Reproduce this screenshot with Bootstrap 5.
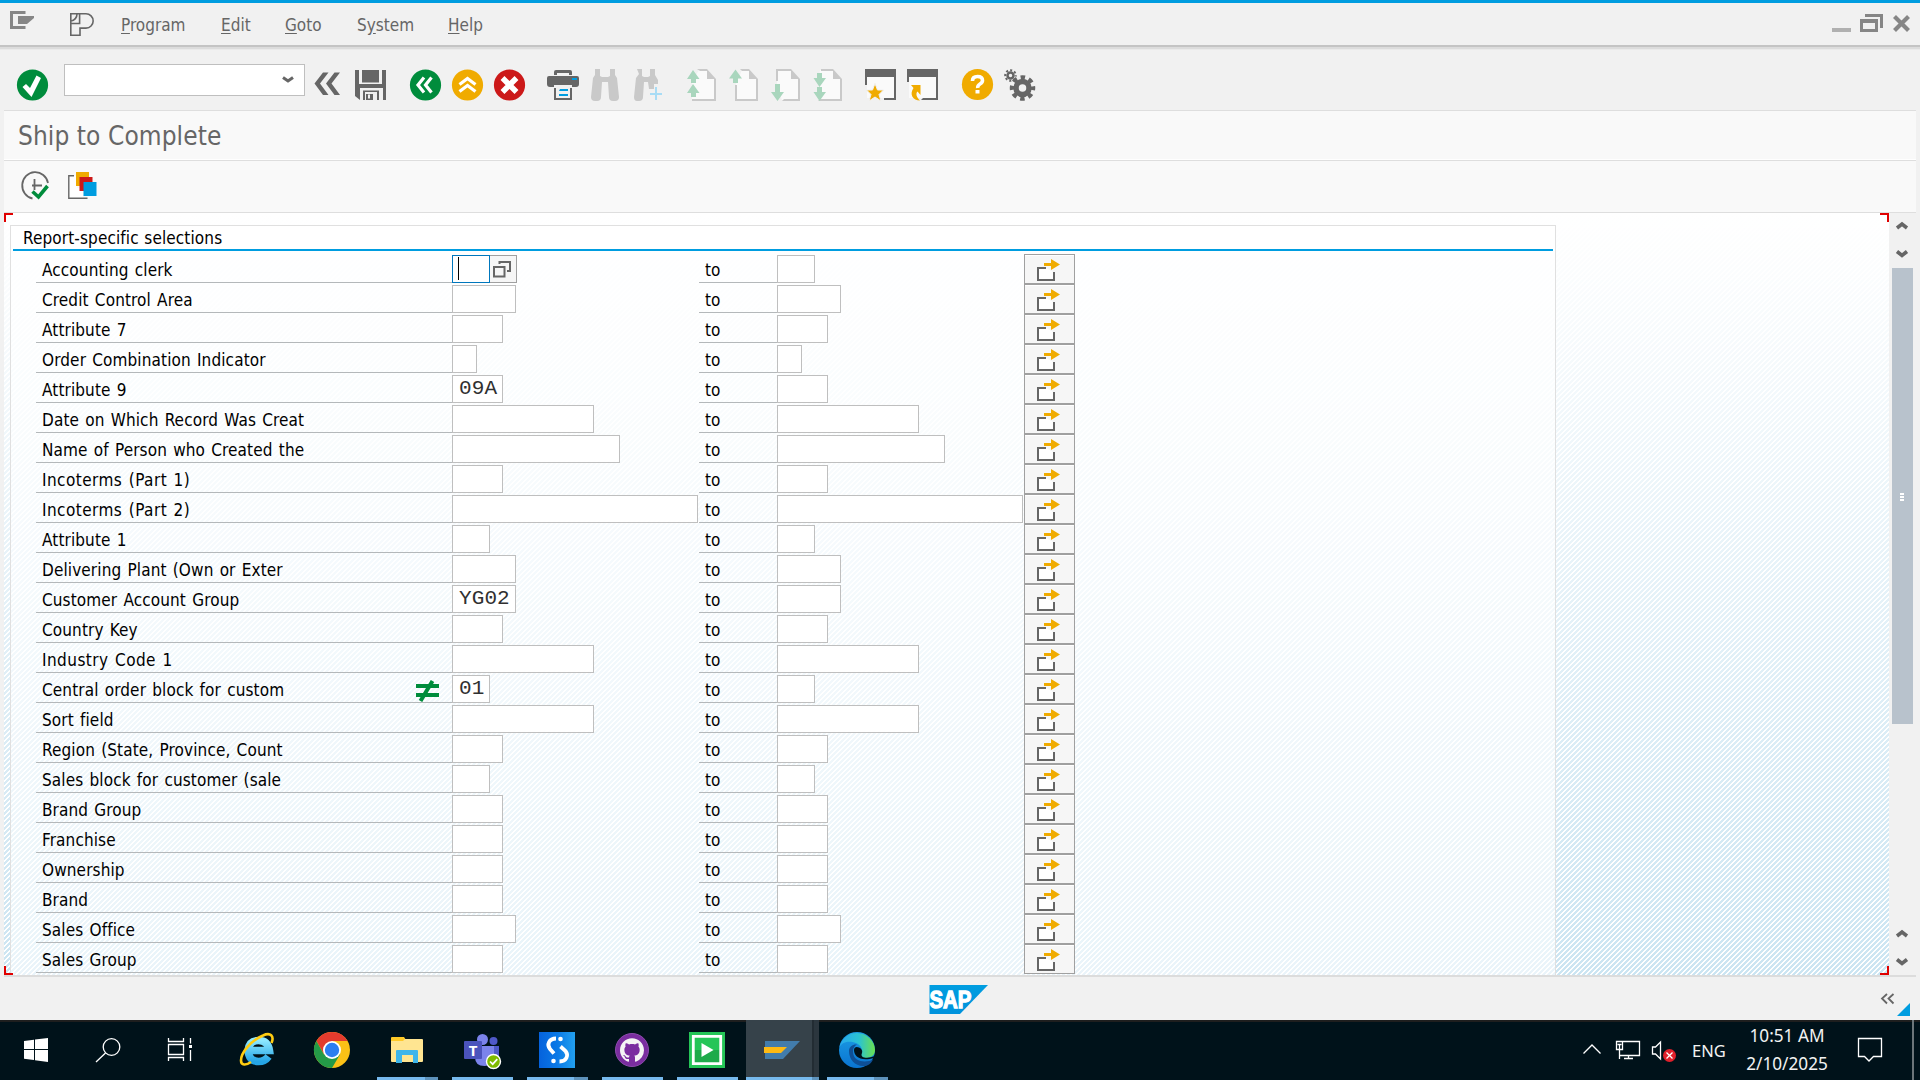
<!DOCTYPE html>
<html lang="en">
<head>
<meta charset="utf-8">
<meta name="viewport" content="width=device-width, initial-scale=1">
<title>Ship to Complete</title>
<link href="https://cdn.jsdelivr.net/npm/bootstrap@5.3.0/dist/css/bootstrap.min.css" rel="stylesheet">
<style>
  html, body { width: 1920px; height: 1080px; overflow: hidden; }
  body { background: #f1f1f1; color: #000; font-family: "DejaVu Sans Condensed", "DejaVu Sans", sans-serif; font-stretch: condensed; font-size: 17px; line-height: 20px; }
  svg { display: block; flex: none; }
  .menu-bar { height: 47px; background: #f1f1f1; border-top: 3px solid #009de0; border-bottom: 2px solid #c4c4c4; color: #666; }
  .menu-bar a { color: #666; text-decoration: none; margin-top: 12px; white-space: nowrap; }
  .menu-bar u { text-underline-offset: 2px; }
  .menu-shadow { height: 3px; background: linear-gradient(#dcdcdc 0 66%, #eaeaea 66%); }
  .sap-frame { margin: 0 4px; }
  .tool-bar { height: 61px; border-bottom: 1px solid #dedede; padding: 18px 0 0 12px; }
  .tool-set { gap: 8px; }
  .cmd-field { width: 241px; height: 32px; margin: -4px 8px 0 14px; border: 1px solid #bfbfbf; background: #fff; padding: 11px 10px; }
  .title-bar { height: 50px; background: #f9f9f9; border-bottom: 1px solid #dedede; box-shadow: inset 0 -1px #fff; font-size: 26px; line-height: 32px; letter-spacing: .08px; color: #666; padding: 9px 0 0 14px; }
  .app-bar { height: 52px; background: #f9f9f9; border-bottom: 1px solid #dedede; padding: 9px 0 0 15px; }
  .work { height: 762px; }
  .canvas-area { width: 1885px; padding: 12px 0 0 6px; overflow: hidden;
    background: linear-gradient(#fff 0, rgba(255,255,255,0) 100%), repeating-linear-gradient(135deg, #cce5f2 0 1.8px, #fff 2.1px 3.2px, #cce5f2 3.5355px); }
  .group-box { width: 1546px; height: 760px; border: 1px solid #e0e0e0; background: rgba(255,255,255,.58); }
  .group-head { height: 25px; margin: 0 2px 3px 2px; border-bottom: 2px solid #009de0; padding: 2px 0 0 10px; background: rgba(255,255,255,.6); letter-spacing: .12px; word-spacing: .6px; }
  .sel-row { display: grid; grid-template-columns: 416px 247px 78px 247px 51px; height: 30px; margin-left: 25px; }
  .sel-label { height: 28px; margin-top: 1px; border-bottom: 1px solid #b4b8ba; padding: 5px 0 0 6px; white-space: nowrap; letter-spacing: .12px; word-spacing: 1.2px; }
  .sel-label .wide-text { letter-spacing: .45px; }
  .sel-field { height: 28px; margin-top: 1px; border: 1px solid #bfbfbf; background: #fff; font: 21px/25px "Liberation Mono", monospace; letter-spacing: .1px; padding-left: 6px; color: #303030; }
  .sel-field.active-cell { border-color: #0077bd; padding: 1px 0 0 5px; }
  .caret-bar { width: 1px; height: 23px; background: #000; }
  .f4 { width: 27px; height: 28px; margin-top: 1px; border: 1px solid #a0a0a0; border-left: 0; background: #f6f6f6; padding: 5px 0 0 3px; }
  .multi { border: 1px solid #a0a0a0; background: #f6f6f6; box-shadow: inset 0 1px #fff; padding: 4px 0 0 12px; }
  .crn { position: absolute; width: 9px; height: 9px; border: 0 solid #e00000; }
  .scroll { width: 27px; background: #f1f1f1; padding-left: 3px; }
  .thumb { width: 21px; height: 456px; background: #b8c2cc; padding: 225px 0 0 8px; }
  .status { height: 45px; border-top: 2px solid #dcdcdc; }
  .task { height: 60px; background: #00121a; border-top: 2px solid #1e1e1e; color: #f2f2f2; font: 17px/28px "Noto Sans", sans-serif; }
  .task svg { margin-top: -2px; }
  .clock { width: 110px; text-align: center; margin: 0 1px 0 7px; font-size: 17.200px; }
</style>
</head>
<body class="d-flex flex-column">
<header>
  <nav class="menu-bar d-flex">
    <svg width="121" height="42" viewBox="0 3 121 42"><path fill="#868686" d="M25.500 11H10v18h15.500v-3H13V14h12.500z"/><path fill="#868686" d="M18 16h16v2l-7 6h-9z"/><path fill="none" stroke="#666" stroke-width="1.600" d="M70.800 13.800H86a7 7 0 0 1 0 14.300h-6v7.100h-9.200zM79.600 14v9.500H71M71 21a7 7 0 0 0 6-7"/></svg>
    <a href="#" style="width:100px"><u>P</u>rogram</a><a href="#" style="width:64px"><u>E</u>dit</a><a href="#" style="width:72px"><u>G</u>oto</a><a href="#" style="width:91px">S<u>y</u>stem</a><a href="#"><u>H</u>elp</a>
    <svg class="ms-auto" width="90" height="42" viewBox="1830 3 90 42"><path fill="#b0b0b0" d="M1832 28h19v4h-19z"/><path fill="#868686" fill-rule="evenodd" d="M1860 19h18v13h-18zm3 4v6h12v-6zM1865 14h18v14h-3V17h-15z"/><path stroke="#868686" stroke-width="4.200" d="M1894.500 16.500l14 14m0-14l-14 14"/></svg>
  </nav>
  <div class="menu-shadow"></div>
</header>
<main class="sap-frame">
  <div class="tool-bar d-flex align-items-start">
    <svg width="34" height="34" viewBox="16 68 34 34"><circle cx="32.500" cy="85" r="15.600" fill="#008c3c"/><path fill="#fff" d="M22.500 87l3.500-3 4 4 6.500-12.500 4.500 2.500-9.500 19z"/></svg>
    <div class="cmd-field d-flex justify-content-end"><svg width="12" height="8" viewBox="0 0 12 8"><path d="M1 1.500l5 3.500 5-3.500" stroke="#666" stroke-width="3" fill="none"/></svg></div>
    <div class="tool-set d-flex">
      <svg width="34" height="34" viewBox="313 68 34 34"><path fill="#666" d="M328.500 72.500H323L314.500 83.500l8.500 11.500h5.500l-8.500-11.500zM340 72.500h-5.500l-8.500 11 8.500 11.500h5.500L331.500 83.500z"/></svg>
      <svg width="34" height="34" viewBox="355 68 34 34"><path fill="#666" d="M355 70h4v14h23V70h4v30h-3V88h-23v12l-5-4zM362 70h17v12.500h-17zM363 90.500h16V100h-2v-8h-12v8h-2zM366 94h7v6h-7z"/><path fill="#f1f1f1" d="M368 94.500h2v4h-2z"/></svg>
    </div>
    <div class="tool-set d-flex" style="margin-left:20px">
      <svg width="34" height="34" viewBox="409 68 34 34"><circle cx="425.500" cy="85" r="15.600" fill="#008c3c"/><path fill="none" stroke="#fff" stroke-width="3.200" d="M424 77.500l-6 7.500 6 7.500M431.500 77.500l-6 7.500 6 7.500"/></svg>
      <svg width="34" height="34" viewBox="451 68 34 34"><circle cx="467.500" cy="85" r="15.600" fill="#f0ab00"/><path fill="none" stroke="#fff" stroke-width="3.200" d="M459.500 84.500l8-6 8 6M459.500 91.500l8-6 8 6"/></svg>
      <svg width="34" height="34" viewBox="493 68 34 34"><circle cx="509.500" cy="85" r="15.600" fill="#cc1919"/><path stroke="#fff" stroke-width="5.500" d="M502.500 78l14 14m0-14l-14 14"/></svg>
    </div>
    <div class="tool-set d-flex" style="margin-left:19px">
      <svg width="34" height="34" viewBox="546 68 34 34"><path fill="#666" d="M554 75v-3q0-2 2-2h14q2 0 2 2v3h-3v-2h-12v2zM549 76h28q2 0 2 2v6q0 3-3 3h-4v-2h-18v2h-4q-3 0-3-3v-6q0-2 2-2zM554 88h2v10h14V88h2v12h-18z"/><path fill="#009de0" d="M572 78h5v2h-5zM560 89h8v2h-9zM559 94h9v2h-9z"/></svg>
      <svg width="34" height="34" viewBox="588 68 34 34"><path fill="#c9c9c9" d="M595 69h5v7l2 1h6l2-1v-7h5v6l2 3 2 19q0 4-4 4h-2q-4 0-4-4l-1-15h-6l-1 15q0 4-4 4h-2q-4 0-4-4l2-19 2-3z"/></svg>
      <svg width="34" height="34" viewBox="630 68 34 34"><path fill="#c9c9c9" d="M637 69h5v7l2 1h4l2-1v-7h5v6l3 5v4h-4v5h-5l-1-7h-4l-1 15q0 4-4 4h-2q-3 0-3-4l2-19 3-4z"/><path stroke="#a8dcf5" stroke-width="2" d="M650 94h12m-6-7v13"/></svg>
    </div>
    <div class="tool-set d-flex" style="margin-left:22px">
      <svg width="34" height="34" viewBox="686 68 34 34"><path fill="#fafafa" d="M699 70h9l7 9v22h-23V82z"/><path fill="#c9c9c9" d="M697 69h10l9 10v22h-24v-2h22V79h-7v-8h-7z"/><path fill="#a9d6bd" d="M693 70l6.500 9H696v4h-5v-4h-4zM693 84l6.500 9H696v4h-5v-4h-4z"/></svg>
      <svg width="34" height="34" viewBox="728 68 34 34"><path fill="#fafafa" d="M742 70h8l7 9v21h-21V84z"/><path fill="#c9c9c9" d="M740 69h9l9 10v22h-23V85h2v14h19V79h-7v-8h-7z"/><path fill="#a9d6bd" d="M735.500 69.500l6.500 9h-4V83h-5v-4.500h-4z"/></svg>
      <svg width="34" height="34" viewBox="770 68 34 34"><path fill="#fafafa" d="M777 70h15l7 9v21h-17l-5-16z"/><path fill="#c9c9c9" d="M776 69h15l9 10v22h-18l2-2h14V79h-7v-8h-13v10h-2z"/><path fill="#a9d6bd" d="M777.500 101l-6.500-9h4v-8h5v8h4z"/></svg>
      <svg width="34" height="34" viewBox="812 68 34 34"><path fill="#fafafa" d="M820 70h13l8 9v21h-22V80z"/><path fill="#c9c9c9" d="M821 69h12l9 10v22h-24l2-2h20V79h-7v-8h-12z"/><path fill="#a9d6bd" d="M819.500 87l-6-9h3.500v-5h5v5h4zM819.500 101l-6-9h3.500v-5h5v5h4z"/></svg>
    </div>
    <div class="tool-set d-flex" style="margin-left:18px">
      <svg width="34" height="34" viewBox="864 68 34 34"><path fill="#fafafa" d="M867 77h27v21h-27z"/><path fill="#666" d="M865 69h31v31h-12v-2h10V77h-27v8h-2z"/><path fill="#f0ab00" stroke="#f1f1f1" d="M875 83.500l2.500 6.500h6l-4.500 4.500 2 6.500-6-4-6 4 2-6.500-4.500-4.500h6z"/></svg>
      <svg width="34" height="34" viewBox="906 68 34 34"><path fill="#fafafa" d="M909 77h27v21h-27z"/><path fill="#666" d="M907 69h31v31h-17l2-2h13V77h-27v5h-2z"/><path fill="#f0ab00" d="M911 85h9.500v10l-3-3.500c-2 2-1 6 2.500 9-7 0-11-6-6.500-12.500z"/></svg>
    </div>
    <div class="tool-set d-flex" style="margin-left:21px">
      <svg width="34" height="34" viewBox="961 68 34 34"><circle cx="977.500" cy="84.500" r="15.600" fill="#f0ab00"/><path fill="none" stroke="#fff" stroke-width="3.600" d="M972.500 81q0-4.500 5-4.500t5 4q0 2-2.500 3.500t-2.300 4"/><path fill="#fff" d="M975.500 90h4v3.500h-4z"/></svg>
      <svg width="34" height="34" viewBox="1003 68 34 34"><g fill="none" stroke="#666"><circle cx="1022.500" cy="88" r="6.500" stroke-width="5.500"/><circle cx="1022.500" cy="88" r="10.500" stroke-width="4.500" stroke-dasharray="4.400 3.847" stroke-dashoffset="2.200"/><circle cx="1010.500" cy="75.500" r="3" stroke-width="2.500"/><circle cx="1010.500" cy="75.500" r="5.300" stroke-width="2" stroke-dasharray="2.080 2.080" stroke-dashoffset="1"/></g></svg>
    </div>
  </div>
  <div class="title-bar">Ship to Complete</div>
  <div class="app-bar d-flex">
    <svg width="34" height="34" viewBox="19 170 34 34"><path d="M48 183a13 13.300 0 1 0-15.500 15.500M34.500 179v11M32 185.500h10" stroke="#666" stroke-width="1.800" fill="none"/><path d="M32.500 191.500l6 5.500 9-11" stroke="#008c3c" stroke-width="3.600" fill="none"/></svg>
    <svg style="margin-left:13px" width="34" height="34" viewBox="66 170 34 34"><path fill="#fff" d="M69 176h8v12h6v10H69z"/><path d="M74 175.700h-5.200v22.500H87.500" stroke="#666" stroke-width="1.400" fill="none"/><path fill="#f0ab00" d="M76 172h13v14H76z"/><path fill="#cc1919" d="M79.500 177h13v14h-13z"/><path fill="#009de0" d="M83.500 182H96.500v14h-13z"/></svg>
  </div>
  <section class="work d-flex">
    <div class="canvas-area position-relative">
      <span class="crn top-0 start-0" style="border-width:2px 0 0 2px"></span><span class="crn top-0 end-0" style="border-width:2px 2px 0 0"></span>
      <span class="crn bottom-0 start-0" style="border-width:0 0 2px 2px"></span><span class="crn bottom-0 end-0" style="border-width:0 2px 2px 0"></span>
      <div class="group-box">
        <div class="group-head">Report-specific selections</div>
        <div id="rows"></div>
      </div>
    </div>
    <div class="scroll d-flex flex-column">
      <svg width="21" height="55" viewBox="1892 213 21 55"><path d="M1897 228l5-4 5 4M1897 251.500l5 4 5-4" fill="none" stroke="#666" stroke-width="3.600"/></svg>
      <div class="thumb"><svg width="4" height="8"><path fill="#fff" d="M0 0h4v2H0zM0 3h4v2H0zM0 6h4v2H0z"/></svg></div>
      <svg class="mt-auto" width="21" height="51" viewBox="1892 924 21 51"><path d="M1897 936l5-4 5 4M1897 959.500l5 4 5-4" fill="none" stroke="#666" stroke-width="3.600"/></svg>
    </div>
  </section>
  <footer class="status d-flex">
    <svg style="margin-left:925px" width="60" height="43" viewBox="929 977 60 43"><defs><linearGradient id="sapg" x2="0" y2="1"><stop stop-color="#009de0"/><stop offset="1" stop-color="#0092dc"/></linearGradient></defs><path fill="url(#sapg)" d="M929.500 985H988l-28 29h-30.500z"/><text x="929.500" y="1007.500" textLength="42" lengthAdjust="spacingAndGlyphs" font-family="Liberation Sans, sans-serif" font-weight="700" font-size="24" fill="#fff" stroke="#fff" stroke-width="1.300">SAP</text></svg>
    <svg class="ms-auto" width="40" height="43" viewBox="1876 977 40 43"><path d="M1887 994l-5 4.500 5 5M1893.500 994l-5 4.500 5 5" fill="none" stroke="#666" stroke-width="1.800"/><path fill="#009de0" d="M1910 1003v13h-13z"/></svg>
  </footer>
</main>
<footer class="task d-flex mt-auto">
  <svg width="219" height="60" viewBox="0 1020 219 60"><path fill="#fff" d="M24 1041l10-1.300v9.300H24zM35 1039.500l13-1.500v11H35zM24 1050h10v10l-10-1.300zM35 1050h13v12l-13-1.800z"/><g fill="none" stroke="#fff" stroke-width="1.300"><circle cx="111.500" cy="1047" r="8.300"/><path d="M105.500 1053l-9.500 9M168.500 1038v3.500h15V1038M168.500 1044.500h15v10h-15zM168.500 1061v-3.500h15v3.500M190.500 1038v5.500M190.500 1050v11"/></g><path fill="#fff" d="M189 1045h3v3h-3z"/></svg>
  <svg width="75" height="60" viewBox="219 1020 75 60"><defs><linearGradient id="ieg" x2="0" y2="1"><stop stop-color="#8ee8ff"/><stop offset="1" stop-color="#25a5e6"/></linearGradient></defs><path fill="none" stroke="url(#ieg)" stroke-width="7.500" d="M250 1050.500h19.500q-1.500-10-11-10t-10.500 10q1 11 10.500 11 6.500 0 10-5"/><path fill="none" stroke="#fc1" stroke-width="2.600" d="M271.500 1043c3-7-1-11-8.500-7.500-12 5-22 17-22 25 0 5 5 5 10 1.500"/></svg>
  <svg width="75" height="60" viewBox="294 1020 75 60"><circle cx="332" cy="1050" r="18" fill="#fbc116"/><path fill="#e33b2e" d="M332 1050v-9h15.600a18 18 0 0 0-31.200 0l7.800 13.500z"/><path fill="#249a47" d="M316.400 1041a18 18 0 0 0 15.600 27l8-13.500-8-4.500-8 4.500z"/><circle cx="332" cy="1050" r="9" fill="#fff"/><circle cx="332" cy="1050" r="7.200" fill="#2c7ef0"/></svg>
  <svg width="75" height="60" viewBox="369 1020 75 60"><path fill="#ffca28" d="M391 1038q0-1 1-1h12l2 3h-1v5h-14z"/><path fill="#ffe591" d="M391 1041h12l2-2h17q1 0 1 1v21q0 1-1 1h-30q-1 0-1-1z"/><path fill="#3eb5ea" d="M396 1063v-12q0-1 1-1h20q1 0 1 1v12h-5v-8h-11v8z"/><path fill="#76b9ed" d="M377 1077h48v3h-48z"/><path fill="#5d92bb" d="M425 1077h13v3h-13z"/></svg>
  <svg width="75" height="60" viewBox="444 1020 75 60"><circle cx="482.500" cy="1039.500" r="5.500" fill="#7b83eb"/><circle cx="493.500" cy="1041" r="4" fill="#5059c9"/><path fill="#5059c9" d="M487 1046h12v12q-4 6-12 3z"/><path fill="#7b83eb" d="M475 1046h19v11q0 9-9.500 9t-9.500-9z"/><rect x="464" y="1041" width="18" height="18" rx="1" fill="#4b53bc"/><text x="473" y="1055.500" text-anchor="middle" font-family="Noto Sans, sans-serif" font-weight="700" font-size="15" fill="#fff">T</text><circle cx="493.500" cy="1061.500" r="7" fill="#7fba00" stroke="#fff" stroke-width="1.400"/><path d="M490 1061.500l2.700 2.700 4.600-5" fill="none" stroke="#fff" stroke-width="1.700"/><path fill="#76b9ed" d="M452 1077h61v3h-61z"/></svg>
  <svg width="75" height="60" viewBox="519 1020 75 60"><defs><linearGradient id="sg"><stop stop-color="#0562dc"/><stop offset=".5" stop-color="#0a78e6"/><stop offset="1" stop-color="#22a0ef"/></linearGradient></defs><path fill="url(#sg)" d="M539 1032h36v36h-36z"/><path fill="none" stroke="#fff" stroke-width="3.800" d="M556 1038.500c-7 0-9.500 6-6 10.500l4 4.500M559.500 1061.500c7 0 9.500-6 6-10.500l-5-4.500"/><circle cx="560.500" cy="1039" r="2.300" fill="#fff"/><circle cx="553.500" cy="1061" r="2.300" fill="#fff"/><path fill="#76b9ed" d="M527 1077h47v3h-47z"/><path fill="#5d92bb" d="M574 1077h14v3h-14z"/></svg>
  <svg width="75" height="60" viewBox="594 1020 75 60"><circle cx="632" cy="1050" r="16.500" fill="#7a2da0" stroke="#8b4bab"/><path fill="#f4f4f4" transform="translate(620 1038.300) scale(1.500)" d="M8 0C3.580 0 0 3.580 0 8c0 3.540 2.290 6.530 5.470 7.590.4.070.55-.17.55-.38 0-.19-.01-.82-.01-1.490-2.010.37-2.530-.49-2.690-.94-.09-.23-.48-.94-.82-1.130-.28-.15-.68-.52-.01-.53.630-.01 1.080.58 1.230.82.720 1.210 1.870.87 2.330.66.070-.52.280-.87.510-1.070-1.780-.2-3.640-.89-3.640-3.950 0-.87.310-1.590.82-2.150-.08-.2-.36-1.020.08-2.120 0 0 .67-.21 2.200.82.640-.18 1.320-.27 2-.27s1.360.09 2 .27c1.530-1.040 2.200-.82 2.200-.82.440 1.100.16 1.920.08 2.120.51.56.82 1.270.82 2.150 0 3.070-1.870 3.750-3.650 3.950.29.25.54.73.54 1.480 0 1.070-.01 1.930-.01 2.200 0 .21.15.46.55.38A8 8 0 0 0 16 8c0-4.420-3.580-8-8-8z"/><path fill="#76b9ed" d="M602 1077h61v3h-61z"/></svg>
  <svg width="75" height="60" viewBox="669 1020 75 60"><path fill="#25c557" d="M689 1032h36v36h-36z"/><path fill="#1eaa4a" d="M694 1050h26v13h-26z"/><path fill="none" stroke="#fff" stroke-width="2.800" d="M693.300 1036.300h27.400v27.400h-27.400z"/><path fill="#fff" d="M701.500 1043l12 7-12 7z"/><path fill="#76b9ed" d="M677 1077h61v3h-61z"/></svg>
  <svg width="75" height="60" viewBox="744 1020 75 60"><path fill="#36424a" d="M746 1020h66v60h-66z"/><path fill="#222c33" d="M812 1020h2v60h-2z"/><path fill="#2b363e" d="M814 1020h5v60h-5z"/><path fill="#427cac" d="M765 1041h35l-17 18h-18z"/><path fill="#fdb913" d="M764 1047h23l-6 6h-17z"/><path fill="#76b9ed" d="M746 1077h66v3h-66z"/><path fill="#5d92bb" d="M812 1077h7v3h-7z"/></svg>
  <svg width="75" height="60" viewBox="819 1020 75 60"><defs><linearGradient id="eg1"><stop stop-color="#27a8ee"/><stop offset=".55" stop-color="#2bc3d2"/><stop offset="1" stop-color="#6be04e"/></linearGradient><linearGradient id="eg2" x2="0" y2="1"><stop stop-color="#1c9de4"/><stop offset="1" stop-color="#0a74d1"/></linearGradient></defs><circle cx="857" cy="1050" r="18" fill="url(#eg2)"/><path fill="url(#eg1)" d="M839.500 1047a18 18 0 0 1 35.500 3c0 6-5 8-9.500 8s-6.500-2-4-5c2-3-1-10-9-11s-11 2-13 5z"/><path fill="#0e4f96" d="M849 1051c0 10 8 17 18 14.500 3-1 5-3.500 6-6-5 3-20 4-20-8 0-4 2-6 4-7-4-.5-8 2-8 6.500z"/><path fill="#00121a" d="M854 1050c0 6 6 12 20 8l-1 1.500 3 1V1055c-5 4-17 4-14-2 2-5-8-9-8-3z"/><path fill="#76b9ed" d="M827 1077h47v3h-47z"/><path fill="#5d92bb" d="M874 1077h14v3h-14z"/></svg>
  <svg class="ms-auto" width="105" height="60" viewBox="1577 1020 105 60"><g fill="none" stroke="#fff" stroke-width="1.300"><path d="M1583.500 1053.500l8.500-8.500 8.500 8.500M1622.500 1041.500h17v14h-20.500M1616.500 1041.500h6v8h-6zM1617.500 1044.500h4M1619.500 1044.500v14.500M1624 1058.500h9M1628.500 1056v2.500M1652.500 1047h3l5-5v17l-5-5h-3z"/></g><circle cx="1669.500" cy="1055.500" r="6.500" fill="#e0202b"/><path stroke="#fff" stroke-width="1.300" d="M1666.500 1052.500l6 6m0-6l-6 6"/></svg>
  <div style="margin:15px 0 0 10px;width:33px;font-size:16.500px">ENG</div>
  <div class="clock">10:51 AM<br>2/10/2025</div>
  <svg width="77" height="60" viewBox="1843 1020 77 60"><path fill="none" stroke="#fff" stroke-width="1.300" d="M1858.500 1038.500h23v18h-8l-4.500 4.500-4.500-4.500h-6z"/><path fill="#6c757a" d="M1912 1020h2v60h-2z"/></svg>
</footer>
<script src="https://cdn.jsdelivr.net/npm/bootstrap@5.3.0/dist/js/bootstrap.bundle.min.js"></script>
<script>
  // label, field width in pixels, preset value, optional option icon
  const rows = [
    ["Accounting clerk", 38], ["Credit Control Area", 64], ["Attribute 7", 51], ["Order Combination Indicator", 25],
    ["Attribute 9", 51, "09A"], ["Date on Which Record Was Creat", 142], ["Name of Person who Created the", 168],
    ["Incoterms (Part 1)", 51], ["Incoterms (Part 2)", 246], ["Attribute 1", 38], ["Delivering Plant (Own or Exter", 64],
    ["Customer Account Group", 64, "YG02"], ["Country Key", 51], ["Industry Code 1", 142],
    ["Central order block for custom", 38, "01", true], ["Sort field", 142], ["Region (State, Province, Count", 51],
    ["Sales block for customer (sale", 38], ["Brand Group", 51], ["Franchise", 51], ["Ownership", 51], ["Brand", 51],
    ["Sales Office", 64], ["Sales Group", 51]
  ];
  const neq = '<svg class="ms-auto" style="margin-right:13px" width="23" height="22" viewBox="0 0 23 22"><path stroke="#008c3c" stroke-width="4" d="M0 6h23M0 15h23M4.500 21L16.500 1"/></svg>';
  const help = '<div class="f4"><svg width="19" height="17" viewBox="0 0 19 17"><path fill="none" stroke="#666" stroke-width="2" d="M1 6h10.500v9.500H1zM6.500 3V1H17v9h-3"/></svg></div>';
  const arrow = '<svg width="24" height="22" viewBox="1037 259 24 22"><path fill="#fff" d="M1038 268h8l7 4v8h-15z"/><path fill="none" stroke="#666" stroke-width="2" d="M1046 268h-8v12h16v-8"/><path fill="#f0ab00" d="M1044 263h7v-4l9 5.500-9 5.500v-4h-7z"/></svg>';
  document.getElementById("rows").innerHTML = rows.map(([label, w, val, opt], i) => `
    <div class="sel-row">
      <div class="sel-label d-flex"><span${/^In/.test(label) ? ' class="wide-text"' : ""}>${label}</span>${opt ? neq : ""}</div>
      <div class="d-flex"><div class="sel-field${i ? "" : " active-cell"}" style="width:${w}px">${i ? (val || "") : '<div class="caret-bar"></div>'}</div>${i ? "" : help}</div>
      <div class="sel-label">to</div>
      <div><div class="sel-field" style="width:${w}px"></div></div>
      <div class="multi">${arrow}</div>
    </div>`).join("");
</script>
</body>
</html>
